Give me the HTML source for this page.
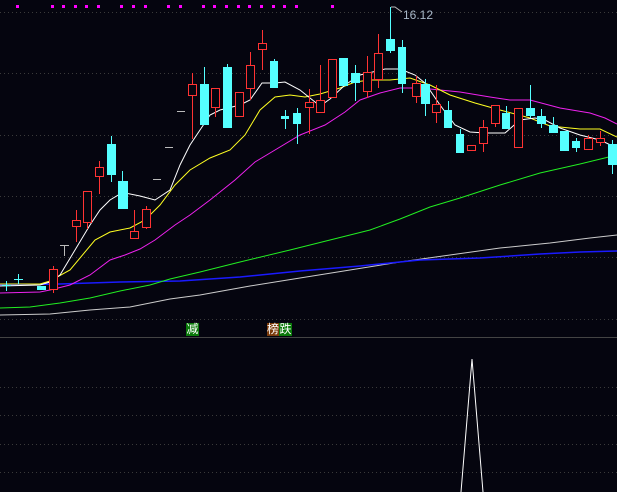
<!DOCTYPE html><html><head><meta charset="utf-8"><style>
html,body{margin:0;padding:0;background:#05050f;width:617px;height:492px;overflow:hidden}
svg{display:block}
.lab{position:absolute;font:12px "Liberation Sans","Noto Sans CJK SC",sans-serif;color:#fff;line-height:13px;height:13px;text-align:center}
</style></head><body>
<svg width="617" height="492" xmlns="http://www.w3.org/2000/svg" shape-rendering="crispEdges">
<rect width="617" height="492" fill="#05050f"/>
<g stroke="#3a3a3a" stroke-dasharray="1,3" stroke-width="1">
<line x1="0" y1="12.5" x2="617" y2="12.5"/><line x1="0" y1="73.5" x2="617" y2="73.5"/><line x1="0" y1="135.5" x2="617" y2="135.5"/><line x1="0" y1="196.5" x2="617" y2="196.5"/><line x1="0" y1="257.5" x2="617" y2="257.5"/><line x1="0" y1="319.5" x2="617" y2="319.5"/>
<line x1="0" y1="387.5" x2="617" y2="387.5"/><line x1="0" y1="415.5" x2="617" y2="415.5"/><line x1="0" y1="444.5" x2="617" y2="444.5"/><line x1="0" y1="472.5" x2="617" y2="472.5"/>
</g>
<line x1="0" y1="337.5" x2="617" y2="337.5" stroke="#444" stroke-width="1"/>
<g fill="#ff00ff">
<rect x="16" y="5" width="3" height="3"/><rect x="51" y="5" width="3" height="3"/><rect x="62" y="5" width="3" height="3"/><rect x="74" y="5" width="3" height="3"/><rect x="85" y="5" width="3" height="3"/><rect x="97" y="5" width="3" height="3"/><rect x="120" y="5" width="3" height="3"/><rect x="132" y="5" width="3" height="3"/><rect x="144" y="5" width="3" height="3"/><rect x="167" y="5" width="3" height="3"/><rect x="179" y="5" width="3" height="3"/><rect x="202" y="5" width="3" height="3"/><rect x="213" y="5" width="3" height="3"/><rect x="225" y="5" width="3" height="3"/><rect x="237" y="5" width="3" height="3"/><rect x="248" y="5" width="3" height="3"/><rect x="260" y="5" width="3" height="3"/><rect x="272" y="5" width="3" height="3"/><rect x="283" y="5" width="3" height="3"/><rect x="295" y="5" width="3" height="3"/><rect x="331" y="5" width="3" height="3"/>
</g>
<g fill="none" stroke-width="1" shape-rendering="auto">
<polyline stroke="#cccccc" points="0,315 50,314 90,310 130,307 170,299 200,295 250,286 300,278 350,270 400,262 450,255 500,248 550,243 590,238 617,235"/>
<polyline stroke="#1a1aff" stroke-width="1.5" points="0,285 60,284 120,282 180,281 240,277 300,271 360,266 420,260 480,258 540,254 580,252 617,251"/>
<polyline stroke="#22ee22" points="0,308 30,307 60,303 90,298 120,291 150,285 170,279 200,272 240,262 290,250 330,240 370,230 400,219 430,207 460,198 500,185 540,173 580,164 617,155"/>
<polyline stroke="#ee22ee" points="0,293 40,292 50,290 70,285 90,275 110,260 125,255 140,249 155,240 175,225 190,215 210,200 235,180 255,162 275,150 300,135 325,125 345,112 360,100 380,93 400,88 420,88 460,92 490,97 510,100 530,100 560,108 590,113 605,118 617,124"/>
<polyline stroke="#ffff22" points="0,284 40,284 50,281 70,270 95,240 110,232 130,228 145,220 160,205 175,185 190,170 210,158 230,150 245,135 260,110 275,97 290,95 305,97 320,94 340,88 355,82 370,80 390,80 410,78 430,85 450,95 475,103 500,110 530,118 550,126 580,129 600,129 617,137"/>
<polyline stroke="#ffffff" points="0,286 40,285 50,282 60,275 75,250 90,225 100,210 110,200 120,194 125,193 140,196 155,200 170,190 180,165 190,145 200,130 210,115 220,110 240,105 250,100 262,83 275,83 285,82 300,90 310,98 320,106 330,99 345,85 360,75 385,69 400,69 415,75 425,83 440,105 455,125 470,132 485,133 505,133 520,120 535,118 545,120 560,128 580,135 600,140 617,148"/>
</g>
<g stroke="#55ffff" fill="#55ffff">
<line x1="6.5" y1="281" x2="6.5" y2="291"/><line x1="2" y1="285.5" x2="11" y2="285.5"/>
<line x1="18.5" y1="274" x2="18.5" y2="284"/><line x1="14" y1="279.5" x2="23" y2="279.5"/>
<rect x="37" y="286" width="9" height="4" stroke="none"/>
</g>
<g stroke="#bbbbbb"><line x1="60" y1="245.5" x2="69" y2="245.5"/><line x1="64.5" y1="245" x2="64.5" y2="256"/>
<line x1="153" y1="179.5" x2="161" y2="179.5"/><line x1="165" y1="147.5" x2="173" y2="147.5"/><line x1="177" y1="111.5" x2="185" y2="111.5"/></g>
<g id="red" fill="#05050f" stroke="#ff3333">
<line x1="53.5" y1="266" x2="53.5" y2="293"/><rect x="49.5" y="269.5" width="8" height="20"/>
<line x1="76.5" y1="210" x2="76.5" y2="242"/><rect x="72.5" y="220.5" width="8" height="6"/>
<line x1="87.5" y1="222" x2="87.5" y2="229"/><rect x="83.5" y="191.5" width="8" height="31"/>
<line x1="99.5" y1="161" x2="99.5" y2="194"/><rect x="95.5" y="167.5" width="8" height="9"/>
<line x1="134.5" y1="210" x2="134.5" y2="238"/><rect x="130.5" y="231.5" width="8" height="7"/>
<line x1="146.5" y1="206" x2="146.5" y2="229"/><rect x="142.5" y="209.5" width="8" height="18"/>
<line x1="192.5" y1="73" x2="192.5" y2="139"/><rect x="188.5" y="84.5" width="8" height="11"/>
<line x1="215.5" y1="88" x2="215.5" y2="117"/><rect x="211.5" y="88.5" width="8" height="19"/>
<rect x="235.5" y="92.5" width="8" height="24"/>
<line x1="250.5" y1="52" x2="250.5" y2="100"/><rect x="246.5" y="65.5" width="8" height="23"/>
<line x1="262.5" y1="30" x2="262.5" y2="70"/><rect x="258.5" y="43.5" width="8" height="6"/>
<line x1="309.5" y1="89" x2="309.5" y2="134"/><rect x="305.5" y="102.5" width="8" height="5"/>
<line x1="320.5" y1="65" x2="320.5" y2="112"/><rect x="316.5" y="100.5" width="8" height="12"/>
<rect x="328.5" y="59.5" width="8" height="38"/>
<line x1="367.5" y1="56" x2="367.5" y2="98"/><rect x="363.5" y="72.5" width="8" height="19"/>
<line x1="378.5" y1="34" x2="378.5" y2="88"/><rect x="374.5" y="53.5" width="8" height="26"/>
<line x1="416.5" y1="76" x2="416.5" y2="103"/><rect x="412.5" y="83.5" width="8" height="13"/>
<line x1="436.5" y1="85" x2="436.5" y2="123"/><rect x="432.5" y="104.5" width="8" height="8"/>
<rect x="467.5" y="145.5" width="8" height="5"/>
<line x1="483.5" y1="120" x2="483.5" y2="152"/><rect x="479.5" y="127.5" width="8" height="16"/>
<line x1="495.5" y1="119" x2="495.5" y2="127"/><rect x="491.5" y="105.5" width="8" height="18"/>
<rect x="514.5" y="108.5" width="8" height="39"/>
<line x1="588.5" y1="135" x2="588.5" y2="150"/><rect x="584.5" y="138.5" width="8" height="11"/>
<line x1="600.5" y1="131" x2="600.5" y2="146"/><rect x="596.5" y="138.5" width="8" height="4"/>
</g>
<g fill="#55ffff" stroke="#55ffff">
<line x1="111.5" y1="136" x2="111.5" y2="182"/><rect x="107" y="144" width="9" height="31" stroke="none"/>
<line x1="122.5" y1="171" x2="122.5" y2="209"/><rect x="118" y="181" width="10" height="28" stroke="none"/>
<line x1="204.5" y1="67" x2="204.5" y2="125"/><rect x="200" y="84" width="9" height="41" stroke="none"/>
<line x1="227.5" y1="64" x2="227.5" y2="128"/><rect x="223" y="67" width="9" height="61" stroke="none"/>
<line x1="274.5" y1="59" x2="274.5" y2="88"/><rect x="270" y="61" width="8" height="27" stroke="none"/>
<line x1="285.5" y1="110" x2="285.5" y2="129"/><rect x="281" y="116" width="8" height="3" stroke="none"/>
<line x1="297.5" y1="108" x2="297.5" y2="144"/><rect x="293" y="113" width="8" height="11" stroke="none"/>
<rect x="339" y="58" width="9" height="28" stroke="none"/>
<line x1="355.5" y1="65" x2="355.5" y2="101"/><rect x="351" y="73" width="9" height="10" stroke="none"/>
<line x1="390.5" y1="7" x2="390.5" y2="53"/><rect x="386" y="39" width="9" height="12" stroke="none"/>
<line x1="402.5" y1="40" x2="402.5" y2="93"/><rect x="398" y="47" width="8" height="37" stroke="none"/>
<line x1="425.5" y1="79" x2="425.5" y2="116"/><rect x="421" y="84" width="9" height="20" stroke="none"/>
<line x1="448.5" y1="101" x2="448.5" y2="128"/><rect x="444" y="110" width="8" height="18" stroke="none"/>
<line x1="460.5" y1="129" x2="460.5" y2="153"/><rect x="456" y="134" width="8" height="19" stroke="none"/>
<line x1="506.5" y1="106" x2="506.5" y2="129"/><rect x="502" y="113" width="8" height="16" stroke="none"/>
<line x1="530.5" y1="85" x2="530.5" y2="118"/><rect x="526" y="108" width="9" height="8" stroke="none"/>
<line x1="541.5" y1="109" x2="541.5" y2="128"/><rect x="537" y="116" width="9" height="8" stroke="none"/>
<line x1="553.5" y1="117" x2="553.5" y2="133"/><rect x="549" y="125" width="9" height="8" stroke="none"/>
<rect x="560" y="131" width="9" height="20" stroke="none"/>
<line x1="576.5" y1="138" x2="576.5" y2="152"/><rect x="572" y="141" width="8" height="7" stroke="none"/>
<line x1="612.5" y1="140" x2="612.5" y2="174"/><rect x="608" y="144" width="9" height="21" stroke="none"/>
</g>
<polyline points="391,7 395,7 402,12" fill="none" stroke="#bbbbbb" shape-rendering="auto"/>
<text x="403" y="19" font-family="Liberation Sans, sans-serif" font-size="12" fill="#a8b8c8">16.12</text>
<polyline points="461,492 472,359 483,492" fill="none" stroke="#ffffff" shape-rendering="auto"/>
<rect x="186" y="323" width="13" height="13" fill="#0a7a0a"/>
<rect x="267" y="323" width="12" height="13" fill="#7a3a0a"/>
<rect x="279" y="323" width="13" height="13" fill="#0a7a0a"/>
</svg>
<div class="lab" style="left:186px;top:323px;width:13px">减</div>
<div class="lab" style="left:267px;top:323px;width:12px">榜</div>
<div class="lab" style="left:279px;top:323px;width:13px">跌</div>
</body></html>
